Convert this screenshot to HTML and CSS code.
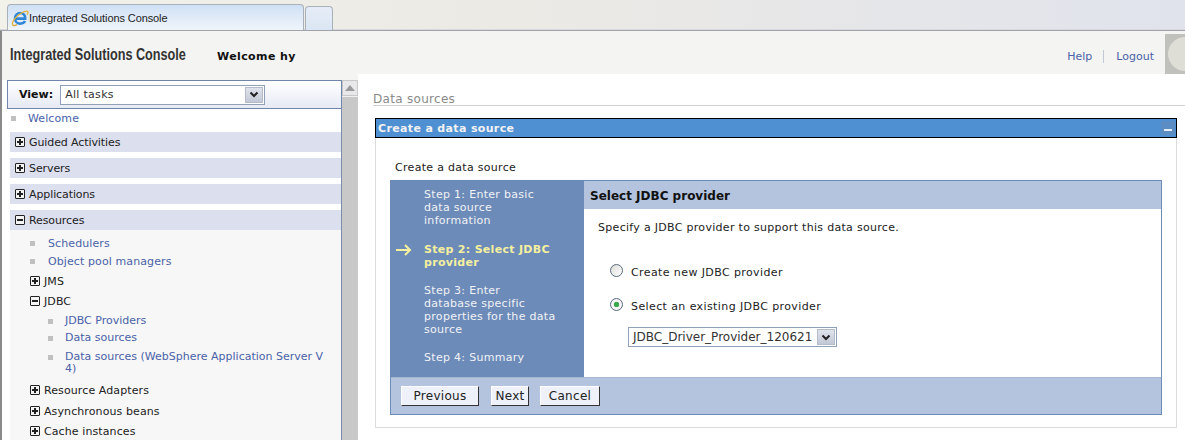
FILE: index.html
```html
<!DOCTYPE html>
<html lang="en">
<head>
    <meta charset="UTF-8">
    <title>Integrated Solutions Console</title>
    <link rel="stylesheet" href="styles.css">
</head>
<body>
    <!-- Browser tabs -->
    <div class="tabbar">
        <div class="tab">
            <svg class="ie-icon" width="18" height="18" viewBox="0 0 18 18">
                <path d="M5 9.6h9.2C14.4 6.4 12.4 4 9.4 4 6.2 4 4 6.4 4 9.4c0 3 2.2 5.2 5.4 5.2 2.2 0 3.8-1 4.6-2.6" fill="none" stroke="#2f86d6" stroke-width="2.6"/>
                <path d="M1.6 15.8C.4 13.4 5 7 10 4.2c3-1.700 6-2.600 6.800-1.600.5.7.1 1.700-.8 3" fill="none" stroke="#e3b23c" stroke-width="1.300"/>
                <path d="M1.600 15.800c.6 1 2.300.8 4.400-.2" fill="none" stroke="#d9a530" stroke-width="1.300"/>
            </svg>
            <span>Integrated Solutions Console</span>
        </div>
        <div class="tab-new"></div>
    </div>

    <!-- Console header -->
    <div class="header">
        <div class="brand">Integrated Solutions Console</div>
        <div class="welcome">Welcome hy</div>
        <div class="header-links">
            <a href="#">Help</a>
            <span class="sep"></span>
            <a href="#">Logout</a>
        </div>
        <div class="header-corner"><div class="corner-disc"></div></div>
    </div>

    <div class="main">
        <!-- Navigation -->
        <div class="sidebar">
            <div class="nav">
                <div class="view-bar">
                    <b>View:</b>
                    <div class="select view-select">
                        <span>All tasks</span>
                        <span class="select-btn"><svg width="10" height="7" viewBox="0 0 10 7"><path d="M1.500 1.500l3.500 3.500 3.500-3.500" fill="none" stroke="#222" stroke-width="2"/></svg></span>
                    </div>
                </div>
                <div class="leaf welcome-leaf"><i class="bullet"></i><a href="#">Welcome</a></div>
                <div class="group"><span class="box plus"></span>Guided Activities</div>
                <div class="group"><span class="box plus"></span>Servers</div>
                <div class="group"><span class="box plus"></span>Applications</div>
                <div class="group"><span class="box minus"></span>Resources</div>
                <div class="group-body">
                    <div class="leaf l1"><i class="bullet"></i><a href="#">Schedulers</a></div>
                    <div class="leaf l1 pool"><i class="bullet"></i><a href="#">Object pool managers</a></div>
                    <div class="sub"><span class="box plus"></span>JMS</div>
                    <div class="sub"><span class="box minus"></span>JDBC</div>
                    <div class="leaf l2 prov"><i class="bullet"></i><a href="#">JDBC Providers</a></div>
                    <div class="leaf l2 ds"><i class="bullet"></i><a href="#">Data sources</a></div>
                    <div class="leaf l2 ds-was"><i class="bullet"></i><a href="#">Data sources (WebSphere Application Server V 4)</a></div>
                    <div class="sub sub-ra"><span class="box plus"></span>Resource Adapters</div>
                    <div class="sub sub-ab"><span class="box plus"></span>Asynchronous beans</div>
                    <div class="sub"><span class="box plus"></span>Cache instances</div>
                </div>
            </div>
            <div class="scrollbar">
                <div class="scroll-up"><svg width="10" height="6" viewBox="0 0 10 6"><path d="M5 0l5 6H0z" fill="#9a9a9a"/></svg></div>
                <div class="scroll-thumb"></div>
            </div>
        </div>

        <!-- Content -->
        <div class="content">
            <div class="crumb">Data sources</div>
            <div class="portlet">
                <div class="portlet-title">
                    <span>Create a data source</span>
                    <span class="minimize"></span>
                </div>
                <div class="portlet-body">
                    <div class="wizard-title">Create a data source</div>
                    <div class="wizard">
                        <div class="wizard-top">
                            <div class="steps">
                                <div class="step step1">Step 1: Enter basic data source information</div>
                                <div class="step step2 current">
                                    <svg class="step-arrow" width="16" height="12" viewBox="0 0 16 12"><path d="M0 6h14M9 1l5 5-5 5" fill="none" stroke="#f4f0a0" stroke-width="2"/></svg>
                                    Step 2: Select JDBC provider
                                </div>
                                <div class="step step3">Step 3: Enter database specific properties for the data source</div>
                                <div class="step step4">Step 4: Summary</div>
                            </div>
                            <div class="pane">
                                <div class="pane-head">Select JDBC provider</div>
                                <div class="pane-body">
                                    <div class="intro">Specify a JDBC provider to support this data source.</div>
                                    <div class="radio-row first"><span class="radio"></span>Create new JDBC provider</div>
                                    <div class="radio-row second"><span class="radio on"></span>Select an existing JDBC provider</div>
                                    <div class="select provider-select">
                                        <span>JDBC_Driver_Provider_120621</span>
                                        <span class="select-btn"><svg width="10" height="7" viewBox="0 0 10 7"><path d="M1.500 1.500l3.500 3.500 3.500-3.500" fill="none" stroke="#222" stroke-width="2"/></svg></span>
                                    </div>
                                </div>
                            </div>
                        </div>
                        <div class="wizard-foot">
                            <button class="btn btn-prev">Previous</button>
                            <button class="btn btn-next">Next</button>
                            <button class="btn btn-cancel">Cancel</button>
                        </div>
                    </div>
                </div>
            </div>
        </div>
    </div>
</body>
</html>
```

FILE: styles.css
```css
html, body {
    margin: 0;
    height: 440px;
    overflow: hidden;
}

body {
    width: 1185px;
    background-color: #ffffff;
    color: #000000;
    font-family: "DejaVu Sans", Verdana, sans-serif;
    font-size: 11px;
}

a {
    color: #4a62a8;
    text-decoration: none;
}

/* Browser tabs */
.tabbar {
    height: 30px;
    display: flex;
    align-items: flex-end;
    padding-left: 7px;
    background: linear-gradient(to right, #f2f1ea 0%, #eceae4 40%, #e0e3ec 100%);
    border-bottom: 1px solid #a0a4aa;
    box-shadow: inset 0 -1px 0 #d8dadf;
}

.tab {
    width: 297px;
    height: 26px;
    box-sizing: border-box;
    display: flex;
    align-items: center;
    padding-left: 3px;
    border: 1px solid #a9b0ba;
    border-bottom: 0;
    border-radius: 4px 4px 0 0;
    background: linear-gradient(to bottom, #cfe0f5, #f0f5fb);
    font-family: "Liberation Sans", sans-serif;
    font-size: 11px;
    letter-spacing: -0.1px;
    color: #222222;
}

.tab-new {
    width: 28px;
    height: 24px;
    box-sizing: border-box;
    margin-left: 1px;
    border: 1px solid #a9b0ba;
    border-bottom: 0;
    border-radius: 4px 4px 0 0;
    background: linear-gradient(to bottom, #e6edf7, #dbe6f4);
}

/* Console header */
.header {
    height: 38px;
    display: flex;
    align-items: center;
    background-color: #f4f4f2;
    border-left: 2px solid #8a8a8a;
    padding-top: 5px;
}

.brand {
    width: 176px;
    margin-left: 8px;
    font-family: "Liberation Sans", sans-serif;
    font-size: 17px;
    font-weight: bold;
    color: #333333;
    white-space: nowrap;
    transform: scaleX(0.745);
    transform-origin: left center;
}

.welcome {
    margin-left: 31px;
    padding-top: 2px;
    font-weight: bold;
    letter-spacing: 0.4px;
    color: #111111;
    flex: 1;
}

.header-links {
    display: flex;
    align-items: center;
    padding-top: 2px;
    margin-right: 11px;
}

.sep {
    width: 1px;
    height: 13px;
    margin: 0 12px 0 11px;
    background-color: #c4c8d4;
}

.header-corner {
    width: 20px;
    height: 40px;
    margin-top: -2px;
    background-color: #c0c0bc;
    overflow: hidden;
    display: flex;
    align-items: center;
}

.corner-disc {
    width: 34px;
    height: 34px;
    flex-shrink: 0;
    margin-left: 3px;
    border-radius: 50%;
    background-color: #deded6;
}

.main {
    display: flex;
    height: 366px;
}

/* Navigation */
.sidebar {
    width: 358px;
    box-sizing: border-box;
    display: flex;
    border-left: 2px solid #8a8a8a;
    padding-top: 6px;
    background: linear-gradient(to bottom, #f4f4f2 6px, #ffffff 6px);
    flex-shrink: 0;
}

.nav {
    width: 340px;
    flex-shrink: 0;
    border-right: 1px solid #7a8ca8;
    box-sizing: border-box;
}

.view-bar {
    height: 29px;
    margin: 0 -1px 0 5px;
    box-sizing: border-box;
    display: flex;
    align-items: center;
    gap: 7px;
    padding-left: 11px;
    border: 1px solid #6f86aa;
    background: linear-gradient(to bottom, #ffffff, #e6eaf4);
}

.view-bar b {
    color: #111111;
}

.select {
    display: flex;
    align-items: center;
    justify-content: space-between;
    box-sizing: border-box;
    background-color: #ffffff;
    border: 1px solid #8fa0b8;
    color: #333333;
}

.view-select {
    width: 205px;
    height: 20px;
    padding: 0 1px 0 4px;
    letter-spacing: 0.3px;
}

.select-btn {
    width: 18px;
    height: 16px;
    display: flex;
    align-items: center;
    justify-content: center;
    background: linear-gradient(to bottom, #dfe3ec, #c2c8d6);
    border: 1px solid #b4bccb;
    box-sizing: border-box;
}

.leaf {
    display: flex;
}

.bullet {
    width: 5px;
    height: 5px;
    flex-shrink: 0;
    background-color: #c0c0c0;
    margin-top: 4px;
}

.welcome-leaf {
    height: 23px;
    padding: 3px 0 0 9px;
    box-sizing: border-box;
}

.welcome-leaf a {
    margin-left: 12px;
    letter-spacing: 0.1px;
}

.group {
    height: 20px;
    margin-left: 8px;
    margin-bottom: 6px;
    display: flex;
    align-items: center;
    gap: 4px;
    padding-left: 5px;
    background-color: #dcdfee;
    color: #222222;
    letter-spacing: -0.1px;
}

.box {
    width: 10px;
    height: 10px;
    box-sizing: border-box;
    flex-shrink: 0;
    border: 1px solid #222222;
    border-radius: 1px;
    position: relative;
    background-color: #f4f4f4;
}

.box::before {
    content: "";
    position: absolute;
    left: 1px;
    right: 1px;
    top: 3px;
    height: 2px;
    background-color: #222222;
}

.plus::after {
    content: "";
    position: absolute;
    left: 3px;
    top: 1px;
    bottom: 1px;
    width: 2px;
    background-color: #222222;
}

.group-body {
    margin-left: 8px;
    margin-top: -6px;
    height: 211px;
    background-color: #f7f7f7;
    padding-top: 6px;
    box-sizing: border-box;
    overflow: hidden;
}

.l1 {
    padding-left: 20px;
    height: 18px;
    padding-top: 1px;
    box-sizing: border-box;
}

.l1 a {
    margin-left: 13px;
    letter-spacing: 0.1px;
}

.pool {
    height: 17px;
}

.l2 {
    padding-left: 38px;
    height: 17px;
    box-sizing: border-box;
}

.l2 a {
    margin-left: 12px;
    line-height: 12px;
    width: 268px;
}

.prov {
    margin-top: 4px;
}

.ds {
    height: 19px;
}

.ds-was {
    height: 27px;
}

.sub {
    height: 20px;
    display: flex;
    align-items: center;
    gap: 4px;
    padding-left: 20px;
    color: #222222;
    letter-spacing: 0.1px;
}

.sub-ra {
    margin-top: 2px;
}

.sub-ab {
    margin-top: 1px;
}

.scrollbar {
    width: 16px;
    flex-shrink: 0;
    background-color: #f0f0f0;
}

.scroll-up {
    height: 16px;
    display: flex;
    align-items: center;
    justify-content: center;
    background: #e8e8ea;
    border: 1px solid #c8c8c8;
    box-sizing: border-box;
}

.scroll-thumb {
    height: 344px;
    margin-top: 1px;
    background-color: #c8c8c8;
}

/* Content */
.content {
    flex: 1;
    padding-top: 18px;
    min-width: 0;
}

.crumb {
    margin-left: 15px;
    height: 13px;
    line-height: 14px;
    font-size: 12px;
    letter-spacing: 0.3px;
    color: #8a8a8a;
    border-bottom: 1px solid #d0d0d0;
}

.portlet {
    margin: 12px 8px 0 17px;
    height: 310px;
    box-sizing: border-box;
    border: 1px solid #dcdcdc;
    border-top: 0;
}

.portlet-title {
    height: 20px;
    box-sizing: border-box;
    margin: 0 -1px;
    display: flex;
    align-items: center;
    justify-content: space-between;
    padding: 0 1px 0 2px;
    background-color: #4f90d3;
    border: 1px solid #000000;
    color: #f2f2f2;
    font-weight: bold;
    letter-spacing: 0.35px;
}

.minimize {
    width: 14px;
    height: 14px;
    box-sizing: border-box;
    padding-top: 8px;
    background-color: #5b8cc4;
}

.minimize::after {
    content: "";
    display: block;
    width: 8px;
    height: 2px;
    margin-left: 3px;
    background-color: #e8eef6;
}

.portlet-body {
    padding: 23px 14px 0 14px;
}

.wizard-title {
    height: 19px;
    line-height: 13px;
    padding-left: 5px;
    letter-spacing: 0.3px;
    color: #222222;
}

.wizard {
    border: 1px solid #6d8bb8;
    height: 235px;
    box-sizing: border-box;
    display: flex;
    flex-direction: column;
}

.wizard-top {
    display: flex;
    height: 196px;
}

.steps {
    width: 193px;
    flex-shrink: 0;
    background-color: #6d8bb8;
    color: #f0f2f6;
    padding: 7px 28px 0 33px;
    box-sizing: border-box;
    line-height: 13px;
    letter-spacing: 0.3px;
}

.step {
    position: relative;
}

.step2 {
    margin-top: 16px;
}

.step3 {
    margin-top: 15px;
}

.step4 {
    margin-top: 15px;
}

.current {
    color: #f4f0a0;
    font-weight: bold;
}

.step-arrow {
    position: absolute;
    left: -28px;
    top: 1px;
}

.pane {
    flex: 1;
    min-width: 0;
}

.pane-head {
    height: 28px;
    line-height: 30px;
    padding-left: 6px;
    background-color: #b4c4de;
    font-size: 12px;
    font-weight: bold;
    color: #111111;
}

.pane-body {
    padding: 12px 0 0 14px;
}

.intro {
    line-height: 14px;
    letter-spacing: 0.3px;
    color: #222222;
}

.radio-row {
    display: flex;
    align-items: center;
    gap: 8px;
    margin-left: 12px;
    height: 16px;
    letter-spacing: 0.4px;
    color: #222222;
}

.first {
    margin-top: 29px;
}

.second {
    margin-top: 18px;
}

.radio {
    width: 13px;
    height: 13px;
    box-sizing: border-box;
    flex-shrink: 0;
    border: 1px solid #5a6a80;
    border-radius: 50%;
    background: linear-gradient(135deg, #dcdcd8, #ffffff);
    margin-top: -3px;
}

.radio.on {
    background: radial-gradient(circle, #3aa84a 0 2.5px, #f4f4f4 3px);
}

.provider-select {
    width: 209px;
    height: 20px;
    margin: 13px 0 0 30px;
    padding: 0 1px 0 4px;
    font-size: 12px;
}

.wizard-foot {
    flex: 1;
    display: flex;
    align-items: center;
    padding: 0 0 0 10px;
    background-color: #b4c4de;
    border-top: 1px solid #a8b8d0;
}

.btn {
    height: 20px;
    padding: 0;
    font-family: "DejaVu Sans", Verdana, sans-serif;
    font-size: 12px;
    letter-spacing: 0.3px;
    color: #222222;
    background-color: #eef0fa;
    border: 1px solid #ffffff;
    border-right-color: #333333;
    border-bottom-color: #333333;
}

.btn-prev {
    width: 78px;
    margin-right: 12px;
}

.btn-next {
    width: 38px;
    margin-right: 11px;
}

.btn-cancel {
    width: 60px;
}
```
